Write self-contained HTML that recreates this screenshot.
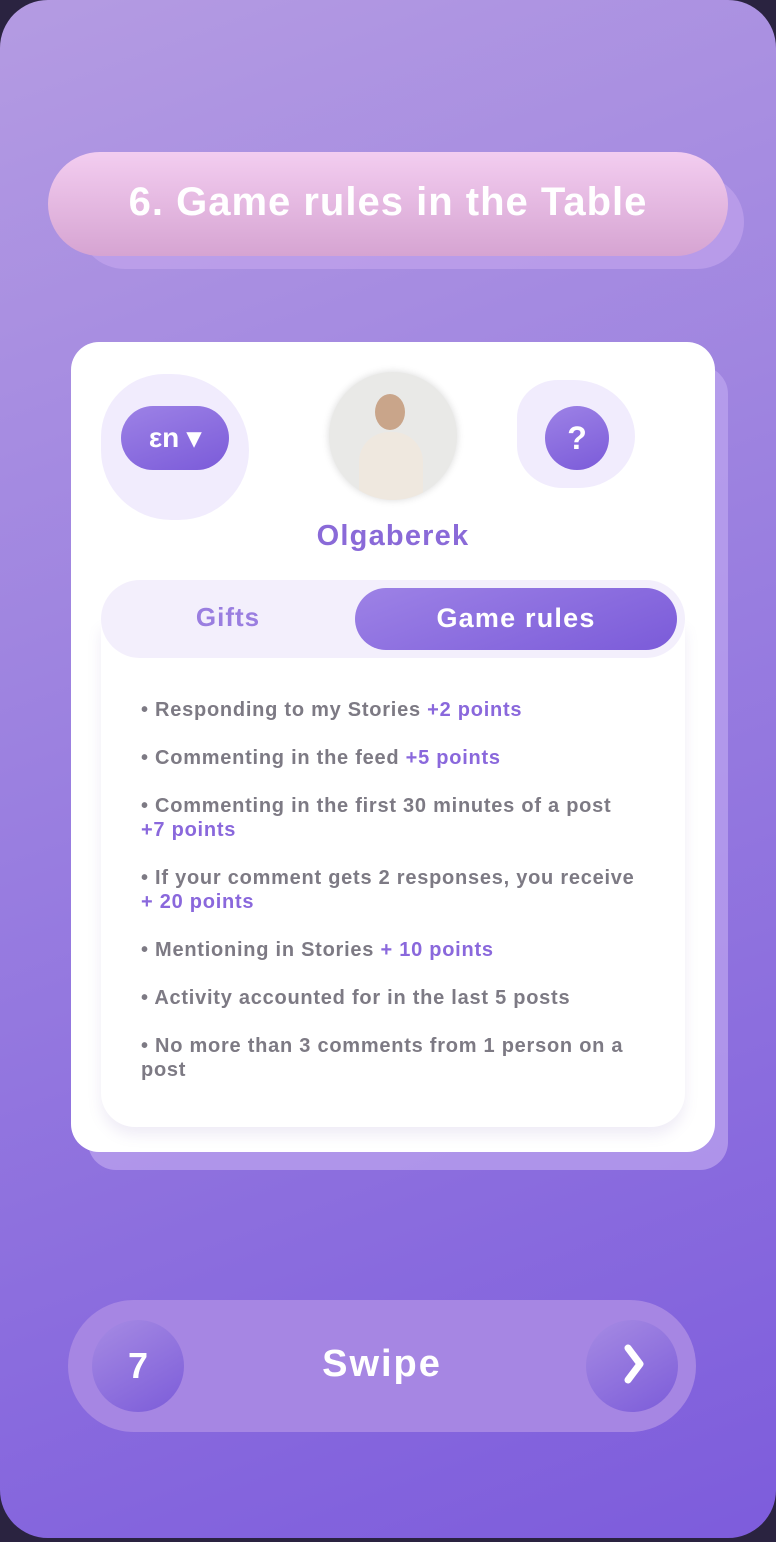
<!DOCTYPE html>
<html><head><meta charset="utf-8"><style>
*{margin:0;padding:0;box-sizing:border-box}
html,body{width:776px;height:1542px;background:#2a2340;overflow:hidden;font-family:"Liberation Sans",sans-serif}
.frame{position:absolute;left:0;top:0;width:776px;height:1538px;border-radius:48px;background:linear-gradient(160deg,#b49be2 0%,#9a7fe0 45%,#7d5cdc 100%);overflow:hidden}
.titleSh{position:absolute;left:78px;top:175px;width:666px;height:94px;border-radius:47px;background:rgba(200,170,240,.55)}
.title{position:absolute;left:48px;top:152px;width:680px;height:104px;border-radius:52px;background:linear-gradient(180deg,#f3cdf0,#d6a4d2);color:#fff;font-size:40px;font-weight:bold;text-align:center;line-height:100px;letter-spacing:1px}
.cardSh{position:absolute;left:88px;top:366px;width:640px;height:804px;border-radius:28px;background:rgba(190,165,240,.7)}
.card{position:absolute;left:71px;top:342px;width:644px;height:810px;border-radius:28px;background:#fff}
.blob{position:absolute;background:#f1ecfd;border-radius:50%}
.pill{position:absolute;background:linear-gradient(160deg,#9d82e6,#7b5bd9);color:#fff;font-weight:bold}
.name{position:absolute;left:0;width:644px;top:178px;text-align:center;color:#8a6ad8;font-size:29px;font-weight:bold;letter-spacing:1.2px}
.tabs{position:absolute;left:30px;top:238px;width:584px;height:78px;border-radius:39px;background:#f3effc}
.rules{position:absolute;left:30px;top:280px;width:584px;height:505px;border-radius:0 0 34px 34px;background:#fff;box-shadow:0 8px 14px rgba(120,100,180,.12)}
.r{position:absolute;left:40px;color:#7d7a84;font-size:20px;font-weight:bold;line-height:24px;width:540px;letter-spacing:0.75px;white-space:nowrap}
.r b{color:#8a68dc}
.swipe{position:absolute;left:68px;top:1300px;width:628px;height:132px;border-radius:66px;background:#a686e3}
.circ{position:absolute;top:20px;width:92px;height:92px;border-radius:50%;background:linear-gradient(150deg,#a68be3,#7c5cd9);color:#fff;font-weight:bold;font-size:36px;text-align:center;line-height:92px}
</style></head><body>
<div class="frame">
<div class="titleSh"></div>
<div class="title">6. Game rules in the Table</div>
<div class="cardSh"></div>
<div class="card">
 <div class="blob" style="left:30px;top:32px;width:148px;height:146px;border-radius:45% 55% 50% 50%"></div>
 <div class="pill" style="left:50px;top:64px;width:108px;height:64px;border-radius:32px;font-size:28px;line-height:64px;text-align:center">εn ▾</div>
 <div style="position:absolute;left:258px;top:30px;width:128px;height:128px;border-radius:50%;background:#e9e9e7;box-shadow:0 0 8px rgba(0,0,0,.15);overflow:hidden">
  <div style="position:absolute;left:46px;top:22px;width:30px;height:36px;border-radius:50%;background:#c9a58a"></div>
  <div style="position:absolute;left:30px;top:60px;width:64px;height:80px;border-radius:30px 30px 0 0;background:#efe8df"></div>
 </div>
 <div class="blob" style="left:446px;top:38px;width:118px;height:108px;border-radius:40% 60% 55% 45%"></div>
 <div class="pill" style="left:474px;top:64px;width:64px;height:64px;border-radius:50%;font-size:32px;line-height:64px;text-align:center">?</div>
 <div class="name">Olgaberek</div>
 <div class="rules">
  <div class="r" style="top:76px">• Responding to my Stories <b>+2 points</b></div>
  <div class="r" style="top:124px">• Commenting in the feed <b>+5 points</b></div>
  <div class="r" style="top:172px">• Commenting in the first 30 minutes of a post<br><b>+7 points</b></div>
  <div class="r" style="top:244px">• If your comment gets 2 responses, you receive<br><b>+ 20 points</b></div>
  <div class="r" style="top:316px">• Mentioning in Stories <b>+ 10 points</b></div>
  <div class="r" style="top:364px">• Activity accounted for in the last 5 posts</div>
  <div class="r" style="top:412px">• No more than 3 comments from 1 person on a<br>post</div>
 </div>
 <div class="tabs">
  <div style="position:absolute;left:0;width:254px;top:0;line-height:74px;text-align:center;color:#9a7ee0;font-size:26px;font-weight:bold;letter-spacing:1px">Gifts</div>
  <div class="pill" style="left:254px;top:8px;width:322px;height:62px;border-radius:31px;font-size:27px;line-height:60px;text-align:center;letter-spacing:1.2px">Game rules</div>
 </div>
</div>
<div class="swipe">
 <div class="circ" style="left:24px">7</div>
 <div style="position:absolute;left:0;width:628px;top:0;line-height:128px;text-align:center;color:#fff;font-weight:bold;font-size:38px;letter-spacing:2px">Swipe</div>
 <div class="circ" style="left:518px"><svg width="92" height="92" viewBox="0 0 92 92"><path d="M42 28 L54 44 L42 60" stroke="#fff" stroke-width="7" fill="none" stroke-linecap="round" stroke-linejoin="round"/></svg></div>
</div>
</div>
</body></html>
